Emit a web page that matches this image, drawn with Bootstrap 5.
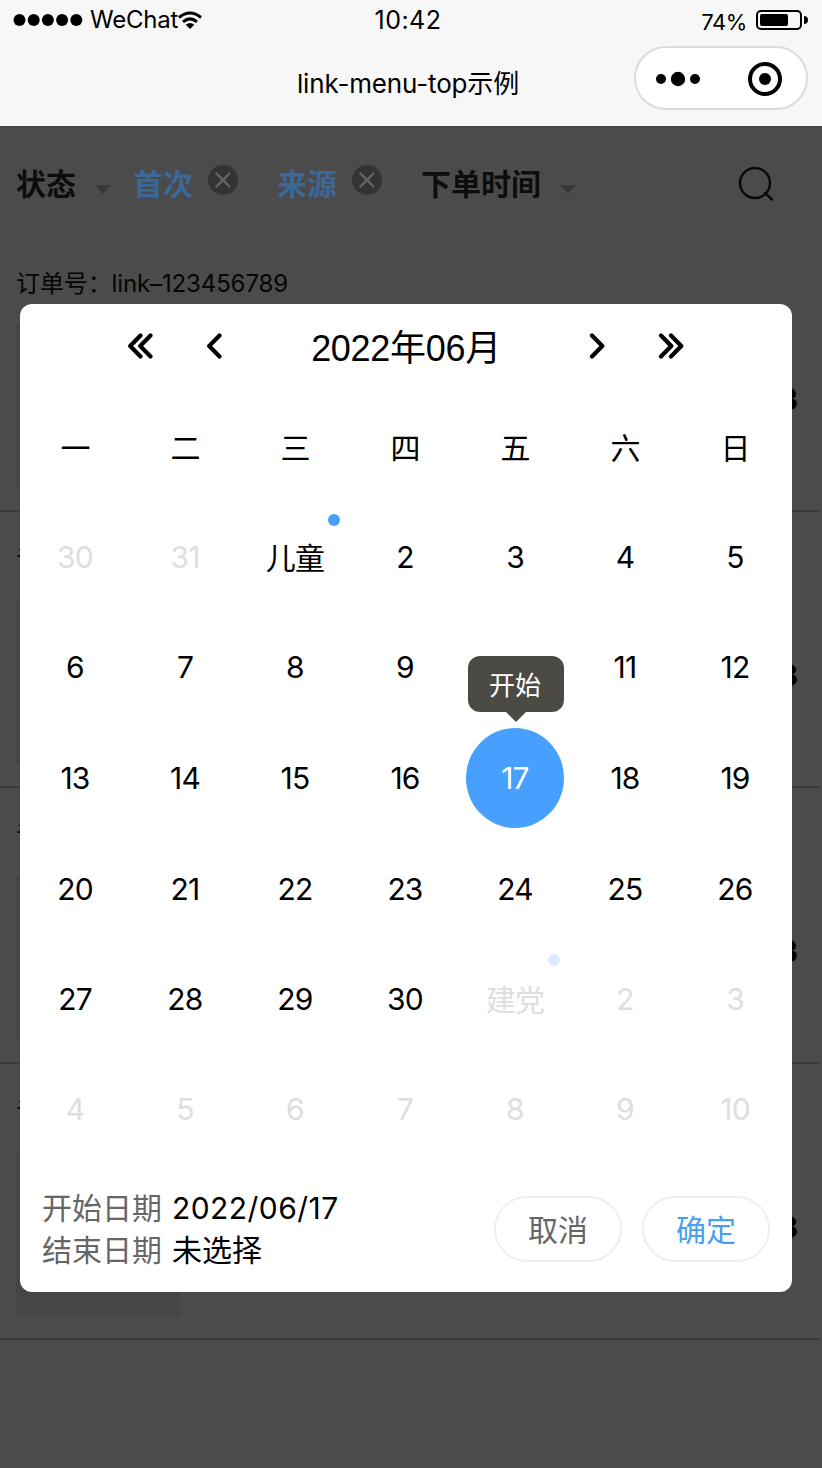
<!DOCTYPE html>
<html lang="zh-CN">
<head>
<meta charset="utf-8">
<meta name="viewport" content="width=device-width, initial-scale=1">
<title>link-menu-top示例</title>
<link href="https://cdn.jsdelivr.net/npm/bootstrap@5.3.0/dist/css/bootstrap.min.css" rel="stylesheet">
<style>
  body { font-family: Inter, "Noto Sans CJK SC", sans-serif; color: #000; background: #4b4b4b; line-height: 1.2; }
  svg { display: block; flex: none; }
  .screen { width: 822px; height: 1468px; }
  .topbar { height: 126px; background: #f7f7f7; }
  .status { height: 40px; padding: 0 14px 0 13px; display: grid; grid-template-columns: 1fr auto 1fr; }
  .carrier { font-size: 24px; letter-spacing: -.2px; margin-left: 7px; }
  .clock { font-size: 25px; letter-spacing: .5px; margin-left: -5px; padding-bottom: 1px; }
  .percent { font-size: 22px; margin-right: 9px; padding-top: 4px; letter-spacing: -.4px; }
  .titlebar { height: 86px; padding: 6px 14px 0 0; display: grid; grid-template-columns: 1fr auto 1fr; }
  .page-name { font-size: 26px; letter-spacing: -.15px; padding-bottom: 5px; margin-left: 8px; }
  .capsule { width: 174px; height: 64px; background: #fff; border: 2px solid #dcdcdc; border-radius: 32px; padding: 2px 24px 0 19px; }
  .filters { height: 110px; padding: 6px 48px 0 16px; font-size: 30px; font-weight: 700; color: #0d0d0d; line-height: 44px; }
  .filters .sort { width: 16px; height: 10px; margin: 11px 0 0 19px; }
  .filters .clear { width: 30px; height: 30px; margin: -9px 39px 0 15px; }
  .picked { color: #3b6799; }
  .order { height: 276px; border-bottom: 2px solid #3b3b3b; margin-right: 2px; padding: 32px 22px 22px 16px; }
  .order-no { font-size: 24px; line-height: 32px; height: 56px; letter-spacing: -.12px; color: #050505; }
  .thumb { width: 164px; height: 164px; background: #464646; }
  .price { font-size: 30px; font-weight: 700; padding-top: 57px; }
  .dialog-card { left: 20px; top: 304px; width: 772px; height: 988px; border-radius: 12px; background: #fff; }
  .month-nav { height: 88px; padding: 0 108px 4px; display: grid; grid-template-columns: 26px 16px 1fr 16px 26px; column-gap: 53px; }
  .month { font: 36px/1.2 "Liberation Sans", "Noto Sans CJK SC", sans-serif; padding-top: 5px; margin: 0 -10px; letter-spacing: -.3px; }
  .days { display: grid; grid-template-columns: repeat(7, 110px); grid-template-rows: 110px 110px 110px 112px 110px 110px 110px; font-size: 30px; }
  .day { letter-spacing: -.8px; }
  .weekday { padding-top: 2px; }
  .festival { padding-top: 1px; }
  .off { color: #dedede; }
  .dot { width: 12px; height: 12px; border-radius: 50%; background: #489ff7; right: 10px; top: 12px; }
  .off .dot { background: #dfe9fe; top: 10px; }
  .chosen { width: 98px; height: 100px; border-radius: 50%; background: #479fff; color: #fff; }
  .tip { left: 8px; top: -66px; width: 96px; height: 56px; border-radius: 12px; background: #4c4a45; color: #fff; font-size: 26px; letter-spacing: 0; padding: 3px 2px 0 0; }
  .tip::after { content: ""; position: absolute; top: 55px; left: 37px; border: 11px solid transparent; border-top-color: #4c4a45; border-bottom: 0; }
  .foot { height: 128px; padding: 1px 22px 0; }
  .range { font-size: 30px; line-height: 42px; padding-top: 22px; }
  .range .tag { color: #666; margin-right: 10px; }
  .range .from { letter-spacing: .45px; }
  .pill { width: 128px; height: 66px; border: 2px solid #efefef; border-radius: 33px; font-size: 30px; padding: 2px 0 0; margin-top: 31px; color: #666; background: #fff; }
  .pill.ok { color: #489ff0; margin-left: 20px; }
</style>
</head>
<body>
<div class="screen position-relative overflow-hidden">
  <header class="topbar">
    <div class="status align-items-center">
      <div class="d-flex align-items-center">
        <svg width="70" height="12"><circle cx="6.5" cy="6" r="6"/><circle cx="20.7" cy="6" r="6"/><circle cx="34.9" cy="6" r="6"/><circle cx="49.1" cy="6" r="6"/><circle cx="63.3" cy="6" r="6"/></svg>
        <span class="carrier">WeChat</span>
        <svg width="24" height="18" fill="none" stroke="#000" stroke-width="3"><path d="M1 6.5Q12 -2.5 23 6.5M5 10.8Q12 5 19 10.8"/><path d="M7.7 13.7Q12 10.5 16.3 13.7L12 18Z" fill="#000" stroke="none"/></svg>
      </div>
      <span class="clock">10:42</span>
      <div class="d-flex align-items-center justify-content-end">
        <span class="percent">74%</span>
        <svg width="52" height="20"><rect x="1" y="1" width="44" height="18" rx="4" fill="none" stroke="#000" stroke-width="2"/><rect x="4" y="4" width="28" height="12" rx="2"/><path d="M48 6Q52 6 52 10T48 14Z"/></svg>
      </div>
    </div>
    <div class="titlebar">
      <span></span>
      <span class="page-name text-nowrap align-self-center">link-menu-top示例</span>
      <div class="capsule d-flex align-items-center justify-content-between ms-auto">
        <svg width="46" height="16"><circle cx="6" cy="8" r="5"/><circle cx="23" cy="8" r="7.2"/><circle cx="40" cy="8" r="5"/></svg>
        <svg width="34" height="34"><circle cx="17" cy="17" r="15" fill="none" stroke="#000" stroke-width="4"/><circle cx="17" cy="17" r="6"/></svg>
      </div>
    </div>
  </header>

  <nav class="filters d-flex align-items-center">
    <span>状态</span>
    <svg class="sort"><path d="M0 0H16L8 9Z" fill="#383838"/></svg>
    <span class="picked" style="margin-left:22px">首次</span>
    <svg class="clear" viewBox="0 0 30 30"><circle cx="15" cy="15" r="15" fill="#333"/><path d="M8.5 8.5l13 13m0-13l-13 13" stroke="#666" stroke-width="2.4" stroke-linecap="round"/></svg>
    <span class="picked">来源</span>
    <svg class="clear" viewBox="0 0 30 30"><circle cx="15" cy="15" r="15" fill="#333"/><path d="M8.5 8.5l13 13m0-13l-13 13" stroke="#666" stroke-width="2.4" stroke-linecap="round"/></svg>
    <span>下单时间</span>
    <svg class="sort"><path d="M0 0H16L8 9Z" fill="#383838"/></svg>
    <svg class="ms-auto" width="36" height="36" fill="none" stroke="#090909" stroke-width="2.4" stroke-linecap="round"><circle cx="17" cy="17" r="15"/><path d="M27 27L34 33.5"/></svg>
  </nav>

  <main>
    <section class="order"><div class="order-no">订单号：link–123456789</div><div class="d-flex justify-content-between"><div class="thumb"></div><span class="price">3</span></div></section>
    <section class="order"><div class="order-no">订</div><div class="d-flex justify-content-between"><div class="thumb"></div><span class="price">3</span></div></section>
    <section class="order"><div class="order-no">订</div><div class="d-flex justify-content-between"><div class="thumb"></div><span class="price">3</span></div></section>
    <section class="order"><div class="order-no">订</div><div class="d-flex justify-content-between"><div class="thumb"></div><span class="price">3</span></div></section>
  </main>

  <div class="dialog-card position-absolute">
    <div class="month-nav align-items-center">
      <svg width="26" height="26" fill="none" stroke="#000" stroke-width="4.2" stroke-linecap="round" stroke-linejoin="round"><path d="M12.5 2.5L2.2 13L12.5 23.5M22.5 2.5L12.2 13L22.5 23.5"/></svg>
      <svg width="16" height="26" fill="none" stroke="#000" stroke-width="4.2" stroke-linecap="round" stroke-linejoin="round"><path d="M12.5 2.5L2.2 13L12.5 23.5"/></svg>
      <span class="month text-center text-nowrap">2022年06月</span>
      <svg width="16" height="26" fill="none" stroke="#000" stroke-width="4.2" stroke-linecap="round" stroke-linejoin="round"><path d="M3 2.5L13.3 13L3 23.5"/></svg>
      <svg width="26" height="26" fill="none" stroke="#000" stroke-width="4.2" stroke-linecap="round" stroke-linejoin="round"><path d="M3 2.5L13.3 13L3 23.5M13 2.5L23.3 13L13 23.5"/></svg>
    </div>
    <div class="days" id="days"></div>
    <div class="foot d-flex">
      <div class="range me-auto text-nowrap">
        <div><span class="tag">开始日期</span><span class="from">2022/06/17</span></div>
        <div><span class="tag">结束日期</span><span>未选择</span></div>
      </div>
      <button class="btn pill">取消</button>
      <button class="btn pill ok">确定</button>
    </div>
  </div>
</div>
<script src="https://cdn.jsdelivr.net/npm/bootstrap@5.3.0/dist/js/bootstrap.bundle.min.js"></script>
<script>
  const labels = [...'一二三四五六日', 30, 31];
  for (let d = 1; d <= 30; d++) labels.push(d === 1 ? '儿童' : d);
  for (let d = 1; d <= 10; d++) labels.push(d === 1 ? '建党' : d);
  document.getElementById('days').innerHTML = labels.map((t, i) => {
    const festival = t === '儿童' || t === '建党';
    const state = (i < 7 ? ' weekday' : '') + (i === 7 || i === 8 || i > 38 ? ' off' : '') + (festival ? ' festival' : '');
    // the tooltip of the 17th covers the 10th, so that cell has no label
    const text = t === 17
      ? '<span class="chosen d-flex align-items-center justify-content-center">17</span><span class="tip position-absolute d-flex align-items-center justify-content-center">开始</span>'
      : t === 10 && i < 30 ? '' : `<span>${t}</span>`;
    return `<div class="day position-relative d-flex align-items-center justify-content-center${state}">${text}${festival ? '<i class="dot position-absolute"></i>' : ''}</div>`;
  }).join('');
</script>
</body>
</html>
